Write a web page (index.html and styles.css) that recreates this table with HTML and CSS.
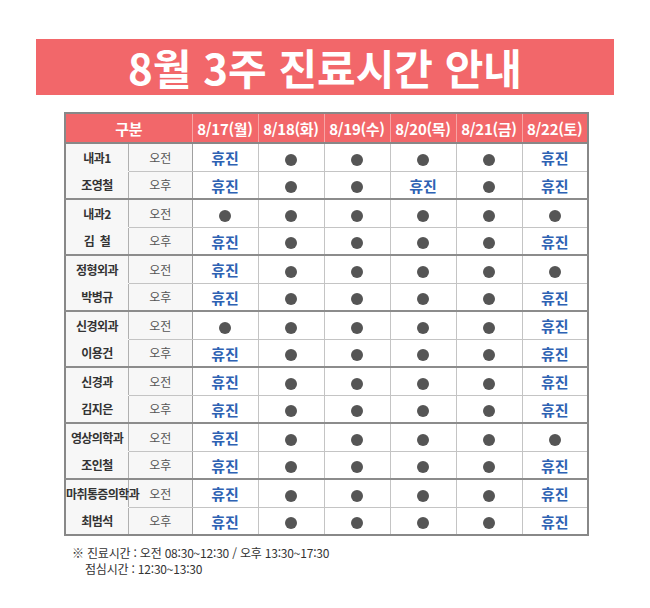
FILE: index.html
```html
<!DOCTYPE html>
<html lang="ko">
<head>
<meta charset="utf-8">
<title>8월 3주 진료시간 안내</title>
<link rel="stylesheet" href="styles.css">
</head>
<body>
<div class="page">
  <h1 class="banner">8월 3주 진료시간 안내</h1>
  <table class="schedule">
    <thead>
      <tr>
        <th colspan="2">구분</th>
        <th>8/17(월)</th><th>8/18(화)</th><th>8/19(수)</th><th>8/20(목)</th><th>8/21(금)</th><th>8/22(토)</th>
      </tr>
    </thead>
    <tbody>
      <tr class="am"><td class="name">내과1</td><td class="half">오전</td><td><b class="off">휴진</b></td><td><i class="dot"></i></td><td><i class="dot"></i></td><td><i class="dot"></i></td><td><i class="dot"></i></td><td><b class="off">휴진</b></td></tr>
      <tr class="pm"><td class="name">조영철</td><td class="half">오후</td><td><b class="off">휴진</b></td><td><i class="dot"></i></td><td><i class="dot"></i></td><td><b class="off">휴진</b></td><td><i class="dot"></i></td><td><b class="off">휴진</b></td></tr>

      <tr class="am"><td class="name">내과2</td><td class="half">오전</td><td><i class="dot"></i></td><td><i class="dot"></i></td><td><i class="dot"></i></td><td><i class="dot"></i></td><td><i class="dot"></i></td><td><i class="dot"></i></td></tr>
      <tr class="pm"><td class="name">김&nbsp;&nbsp;철</td><td class="half">오후</td><td><b class="off">휴진</b></td><td><i class="dot"></i></td><td><i class="dot"></i></td><td><i class="dot"></i></td><td><i class="dot"></i></td><td><b class="off">휴진</b></td></tr>

      <tr class="am"><td class="name">정형외과</td><td class="half">오전</td><td><b class="off">휴진</b></td><td><i class="dot"></i></td><td><i class="dot"></i></td><td><i class="dot"></i></td><td><i class="dot"></i></td><td><i class="dot"></i></td></tr>
      <tr class="pm"><td class="name">박병규</td><td class="half">오후</td><td><b class="off">휴진</b></td><td><i class="dot"></i></td><td><i class="dot"></i></td><td><i class="dot"></i></td><td><i class="dot"></i></td><td><b class="off">휴진</b></td></tr>

      <tr class="am"><td class="name">신경외과</td><td class="half">오전</td><td><i class="dot"></i></td><td><i class="dot"></i></td><td><i class="dot"></i></td><td><i class="dot"></i></td><td><i class="dot"></i></td><td><b class="off">휴진</b></td></tr>
      <tr class="pm"><td class="name">이용건</td><td class="half">오후</td><td><b class="off">휴진</b></td><td><i class="dot"></i></td><td><i class="dot"></i></td><td><i class="dot"></i></td><td><i class="dot"></i></td><td><b class="off">휴진</b></td></tr>

      <tr class="am"><td class="name">신경과</td><td class="half">오전</td><td><b class="off">휴진</b></td><td><i class="dot"></i></td><td><i class="dot"></i></td><td><i class="dot"></i></td><td><i class="dot"></i></td><td><b class="off">휴진</b></td></tr>
      <tr class="pm"><td class="name">김지은</td><td class="half">오후</td><td><b class="off">휴진</b></td><td><i class="dot"></i></td><td><i class="dot"></i></td><td><i class="dot"></i></td><td><i class="dot"></i></td><td><b class="off">휴진</b></td></tr>

      <tr class="am"><td class="name">영상의학과</td><td class="half">오전</td><td><b class="off">휴진</b></td><td><i class="dot"></i></td><td><i class="dot"></i></td><td><i class="dot"></i></td><td><i class="dot"></i></td><td><i class="dot"></i></td></tr>
      <tr class="pm"><td class="name">조인철</td><td class="half">오후</td><td><b class="off">휴진</b></td><td><i class="dot"></i></td><td><i class="dot"></i></td><td><i class="dot"></i></td><td><i class="dot"></i></td><td><b class="off">휴진</b></td></tr>

      <tr class="am"><td class="name">마취통증의학과</td><td class="half">오전</td><td><b class="off">휴진</b></td><td><i class="dot"></i></td><td><i class="dot"></i></td><td><i class="dot"></i></td><td><i class="dot"></i></td><td><b class="off">휴진</b></td></tr>
      <tr class="pm"><td class="name">최범석</td><td class="half">오후</td><td><b class="off">휴진</b></td><td><i class="dot"></i></td><td><i class="dot"></i></td><td><i class="dot"></i></td><td><i class="dot"></i></td><td><b class="off">휴진</b></td></tr>
    </tbody>
  </table>
  <div class="note">
    <p>※ 진료시간 : 오전 08:30~12:30 / 오후 13:30~17:30</p>
    <p class="indent">점심시간 : 12:30~13:30</p>
  </div>
</div>
</body>
</html>
```

FILE: styles.css
```css
* { box-sizing: border-box; }
html, body { margin: 0; padding: 0; background: #ffffff; }
body {
  font-family: "Noto Sans CJK KR", "Noto Sans", sans-serif;
  color: #333;
}
.page {
  width: 650px;
  height: 608px;
  padding-top: 39px;
}
.banner {
  margin: 0 0 0 36px;
  width: 578px;
  height: 56px;
  background: #f2676a;
  color: #fff;
  font-size: 42px;
  font-weight: 700;
  line-height: 56px;
  text-align: center;
}
.schedule {
  margin: 17px 0 0 64px;
  width: 522px;
  border-collapse: collapse;
  border: 2px solid #888;
  table-layout: fixed;
}
.schedule th {
  background: #f2676a;
  color: #fff;
  font-size: 15px;
  font-weight: 700;
  height: 30px;
  padding: 0;
  white-space: nowrap;
  letter-spacing: -0.3px;
  border: 1px solid #f7a4a4;
  border-bottom: 2px solid #888;
  width: 66px;
}
.schedule th:first-child { width: 127px; }
.schedule td {
  height: 28px;
  padding: 0;
  text-align: center;
  vertical-align: middle;
  border: 1px solid #c4c4c4;
  background: #fff;
  white-space: nowrap;
}
.schedule tr.am td { border-top: 2px solid #8c8c8c; }
.schedule tr.am:first-child td { border-top: 2px solid #888; }
.schedule td.name {
  width: 91px;
  background: #f7f7f7;
  font-size: 12px;
  font-weight: 700;
  color: #333;
  letter-spacing: -0.6px;
  border-right: 1px solid #b0b0b0;
}
.schedule tr.am td.name { border-bottom: 1px solid #f7f7f7; }
.schedule td.half {
  width: 36px;
  background: #f7f7f7;
  font-size: 12px;
  color: #555;
  border-right: 1px solid #a0a0a0;
}
.off {
  color: #2e62b3;
  font-weight: 700;
  font-size: 15px;
}
.dot {
  display: inline-block;
  width: 12px;
  height: 12px;
  border-radius: 50%;
  background: #555;
  vertical-align: middle;
}
.note {
  margin: 9px 0 0 72px;
  font-size: 12px;
  color: #333;
  line-height: 16px;
  letter-spacing: -0.2px;
}
.note p { margin: 0; }
.note .indent { padding-left: 13px; }
```
